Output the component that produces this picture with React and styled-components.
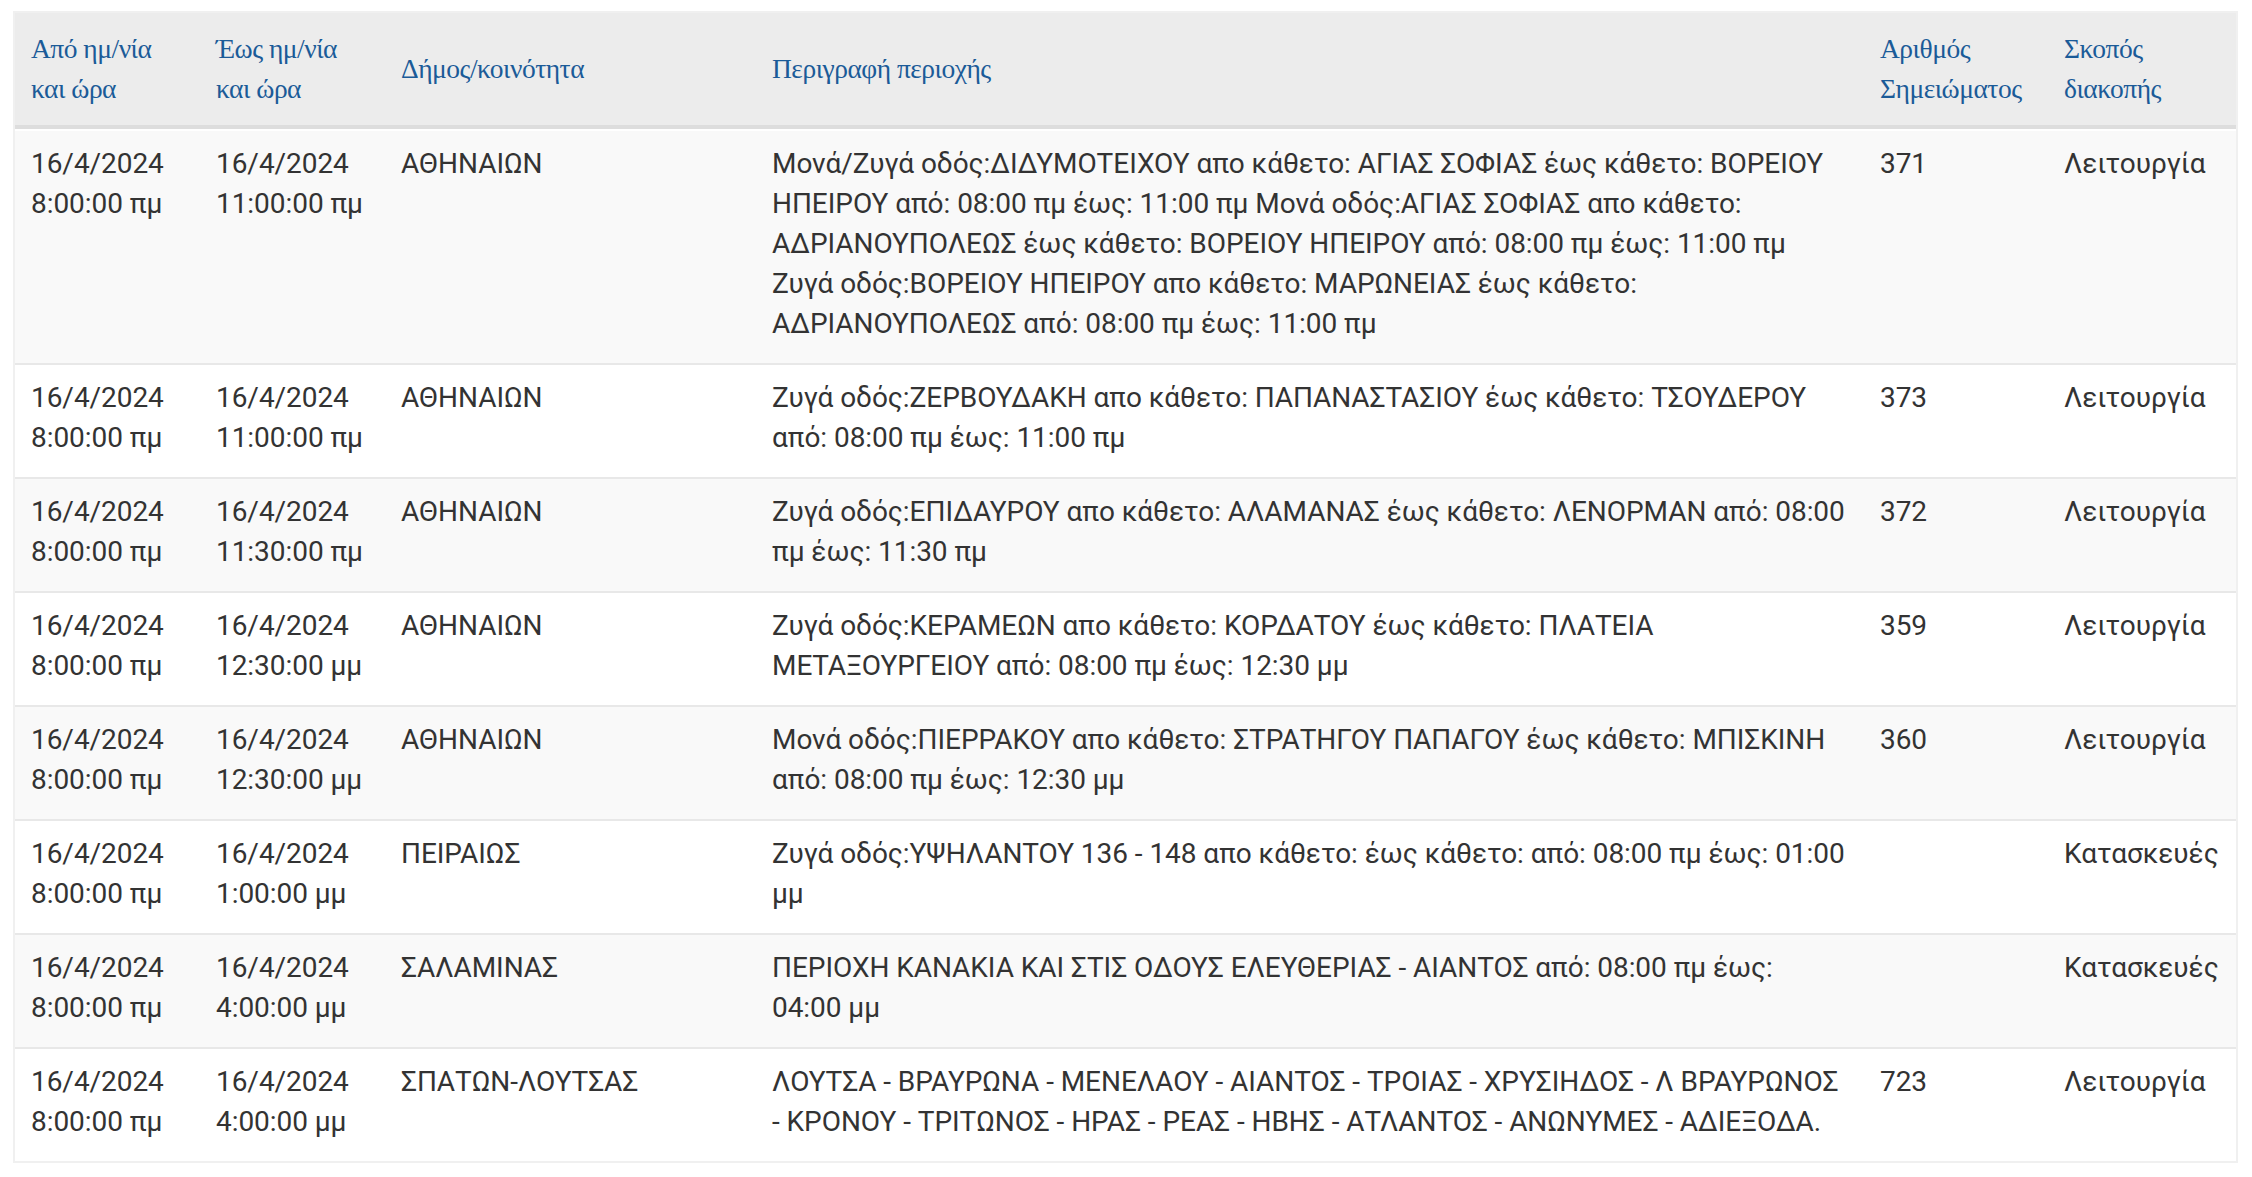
import React from "react";
import styled, { createGlobalStyle } from "styled-components";

const GlobalStyle = createGlobalStyle`
  html, body {
    margin: 0;
    padding: 0;
    background: #ffffff;
  }
  body {
    font-family: Roboto, "Noto Sans", "Liberation Sans", sans-serif;
    color: #333333;
  }
`;

const Page = styled.div`
  padding: 11px 14px 16px 13px;
`;

const Table = styled.table`
  width: 100%;
  table-layout: fixed;
  border-collapse: separate;
  border-spacing: 0;
  border: 2px solid #f0f0f0;
  font-size: 28px;
  line-height: 40px;
`;

const HeadRow = styled.tr`
  background: #ececec;
`;

const HeadCell = styled.th`
  padding: 16px;
  text-align: left;
  vertical-align: middle;
  font-family: "Liberation Serif", "DejaVu Serif", serif;
  font-weight: normal;
  font-size: 27.5px;
  letter-spacing: -0.5px;
  line-height: 40px;
  color: #1b5b98;
  border-bottom: 4px solid #dddddd;
`;

const BodyRow = styled.tr`
  background: ${(p) => (p.$striped ? "#f9f9f9" : "#ffffff")};
`;

const Cell = styled.td`
  padding: 13px 16px 19px;
  vertical-align: top;
  text-align: left;
  color: #333333;
  font-family: Roboto, "Noto Sans", "Liberation Sans", sans-serif;
  letter-spacing: -0.05px;
  border-top: 2px solid ${(p) => (p.$first ? "#ffffff" : "#e8e8e8")};
  word-wrap: break-word;
`;

const Line = styled.span`
  display: block;
`;

const columns = [
  { width: 185, lines: ["Από ημ/νία", "και ώρα"] },
  { width: 185, lines: ["Έως ημ/νία", "και ώρα"] },
  { width: 371, lines: ["Δήμος/κοινότητα"] },
  { width: 1108, lines: ["Περιγραφή περιοχής"] },
  { width: 184, lines: ["Αριθμός", "Σημειώματος"] },
  { width: 188, lines: ["Σκοπός", "διακοπής"] },
];

const rows = [
  {
    from: ["16/4/2024", "8:00:00 πμ"],
    to: ["16/4/2024", "11:00:00 πμ"],
    area: "ΑΘΗΝΑΙΩΝ",
    desc: "Μονά/Ζυγά οδός:ΔΙΔΥΜΟΤΕΙΧΟΥ απο κάθετο: ΑΓΙΑΣ ΣΟΦΙΑΣ έως κάθετο: ΒΟΡΕΙΟΥ ΗΠΕΙΡΟΥ από: 08:00 πμ έως: 11:00 πμ Μονά οδός:ΑΓΙΑΣ ΣΟΦΙΑΣ απο κάθετο: ΑΔΡΙΑΝΟΥΠΟΛΕΩΣ έως κάθετο: ΒΟΡΕΙΟΥ ΗΠΕΙΡΟΥ από: 08:00 πμ έως: 11:00 πμ Ζυγά οδός:ΒΟΡΕΙΟΥ ΗΠΕΙΡΟΥ απο κάθετο: ΜΑΡΩΝΕΙΑΣ έως κάθετο: ΑΔΡΙΑΝΟΥΠΟΛΕΩΣ από: 08:00 πμ έως: 11:00 πμ",
    num: "371",
    purpose: "Λειτουργία",
  },
  {
    from: ["16/4/2024", "8:00:00 πμ"],
    to: ["16/4/2024", "11:00:00 πμ"],
    area: "ΑΘΗΝΑΙΩΝ",
    desc: "Ζυγά οδός:ΖΕΡΒΟΥΔΑΚΗ απο κάθετο: ΠΑΠΑΝΑΣΤΑΣΙΟΥ έως κάθετο: ΤΣΟΥΔΕΡΟΥ από: 08:00 πμ έως: 11:00 πμ",
    num: "373",
    purpose: "Λειτουργία",
  },
  {
    from: ["16/4/2024", "8:00:00 πμ"],
    to: ["16/4/2024", "11:30:00 πμ"],
    area: "ΑΘΗΝΑΙΩΝ",
    desc: "Ζυγά οδός:ΕΠΙΔΑΥΡΟΥ απο κάθετο: ΑΛΑΜΑΝΑΣ έως κάθετο: ΛΕΝΟΡΜΑΝ από: 08:00 πμ έως: 11:30 πμ",
    num: "372",
    purpose: "Λειτουργία",
  },
  {
    from: ["16/4/2024", "8:00:00 πμ"],
    to: ["16/4/2024", "12:30:00 μμ"],
    area: "ΑΘΗΝΑΙΩΝ",
    desc: "Ζυγά οδός:ΚΕΡΑΜΕΩΝ απο κάθετο: ΚΟΡΔΑΤΟΥ έως κάθετο: ΠΛΑΤΕΙΑ ΜΕΤΑΞΟΥΡΓΕΙΟΥ από: 08:00 πμ έως: 12:30 μμ",
    num: "359",
    purpose: "Λειτουργία",
  },
  {
    from: ["16/4/2024", "8:00:00 πμ"],
    to: ["16/4/2024", "12:30:00 μμ"],
    area: "ΑΘΗΝΑΙΩΝ",
    desc: "Μονά οδός:ΠΙΕΡΡΑΚΟΥ απο κάθετο: ΣΤΡΑΤΗΓΟΥ ΠΑΠΑΓΟΥ έως κάθετο: ΜΠΙΣΚΙΝΗ από: 08:00 πμ έως: 12:30 μμ",
    num: "360",
    purpose: "Λειτουργία",
  },
  {
    from: ["16/4/2024", "8:00:00 πμ"],
    to: ["16/4/2024", "1:00:00 μμ"],
    area: "ΠΕΙΡΑΙΩΣ",
    desc: "Ζυγά οδός:ΥΨΗΛΑΝΤΟΥ 136 - 148 απο κάθετο: έως κάθετο: από: 08:00 πμ έως: 01:00 μμ",
    num: "",
    purpose: "Κατασκευές",
  },
  {
    from: ["16/4/2024", "8:00:00 πμ"],
    to: ["16/4/2024", "4:00:00 μμ"],
    area: "ΣΑΛΑΜΙΝΑΣ",
    desc: "ΠΕΡΙΟΧΗ ΚΑΝΑΚΙΑ ΚΑΙ ΣΤΙΣ ΟΔΟΥΣ ΕΛΕΥΘΕΡΙΑΣ - ΑΙΑΝΤΟΣ από: 08:00 πμ έως: 04:00 μμ",
    num: "",
    purpose: "Κατασκευές",
  },
  {
    from: ["16/4/2024", "8:00:00 πμ"],
    to: ["16/4/2024", "4:00:00 μμ"],
    area: "ΣΠΑΤΩΝ-ΛΟΥΤΣΑΣ",
    desc: "ΛΟΥΤΣΑ - ΒΡΑΥΡΩΝΑ - ΜΕΝΕΛΑΟΥ - ΑΙΑΝΤΟΣ - ΤΡΟΙΑΣ - ΧΡΥΣΙΗΔΟΣ - Λ ΒΡΑΥΡΩΝΟΣ - ΚΡΟΝΟΥ - ΤΡΙΤΩΝΟΣ - ΗΡΑΣ - ΡΕΑΣ - ΗΒΗΣ - ΑΤΛΑΝΤΟΣ - ΑΝΩΝΥΜΕΣ - ΑΔΙΕΞΟΔΑ.",
    num: "723",
    purpose: "Λειτουργία",
  },
];

function Lines({ items }) {
  return items.map((t, i) => <Line key={i}>{t}</Line>);
}

export default function App() {
  return (
    <Page>
      <GlobalStyle />
      <Table>
        <colgroup>
          {columns.map((c, i) => (
            <col key={i} style={{ width: c.width }} />
          ))}
        </colgroup>
        <thead>
          <HeadRow>
            {columns.map((c, i) => (
              <HeadCell key={i}>
                <Lines items={c.lines} />
              </HeadCell>
            ))}
          </HeadRow>
        </thead>
        <tbody>
          {rows.map((r, i) => (
            <BodyRow key={i} $striped={i % 2 === 0}>
              <Cell $first={i === 0}>
                <Lines items={r.from} />
              </Cell>
              <Cell $first={i === 0}>
                <Lines items={r.to} />
              </Cell>
              <Cell $first={i === 0}>{r.area}</Cell>
              <Cell $first={i === 0}>{r.desc}</Cell>
              <Cell $first={i === 0}>{r.num}</Cell>
              <Cell $first={i === 0}>{r.purpose}</Cell>
            </BodyRow>
          ))}
        </tbody>
      </Table>
    </Page>
  );
}
